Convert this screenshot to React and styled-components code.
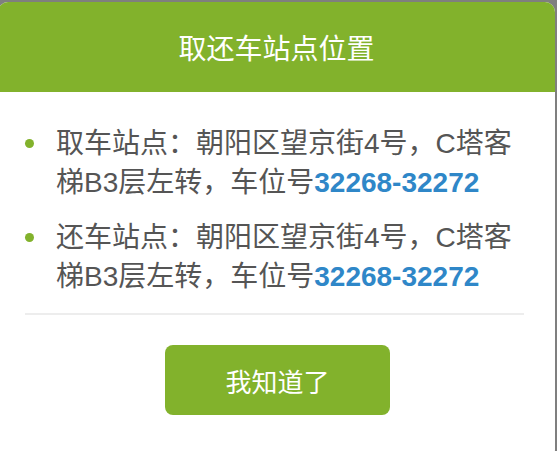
import React from "react";
import styled, { createGlobalStyle } from "styled-components";

const Global = createGlobalStyle`
  html, body { margin: 0; padding: 0; background: #7f7f7f; }
  body { font-family: "Liberation Sans", "Noto Sans CJK SC", sans-serif; overflow: hidden; }
`;

const Dialog = styled.div`
  margin: 2px 0 0 -2px;
  width: 557px;
  height: 452px;
  background: #ffffff;
  border-radius: 10px 10px 4px 4px;
  overflow: hidden;
  display: flex;
  flex-direction: column;
`;

const Header = styled.div`
  height: 90px;
  background: #82b22c;
  color: #ffffff;
  font-size: 28px;
  display: flex;
  align-items: center;
  justify-content: center;
`;

const List = styled.ul`
  list-style: none;
  margin: 0;
  padding: 32px 30px 0 58px;
  display: flex;
  flex-direction: column;
  gap: 16px;
`;

const Item = styled.li`
  position: relative;
  font-size: 28px;
  line-height: 39px;
  color: #555555;
  &::before {
    content: "";
    position: absolute;
    left: -31px;
    top: 15px;
    width: 9px;
    height: 9px;
    border-radius: 50%;
    background: #82b22c;
  }
`;

const Num = styled.span`
  color: #2f87c8;
  font-weight: bold;
`;

const Divider = styled.hr`
  border: none;
  height: 2px;
  background: #ededed;
  margin: 17px 31px 0 27px;
`;

const Footer = styled.div`
  display: flex;
  justify-content: center;
  padding-top: 30px;
`;

const Button = styled.button`
  width: 225px;
  height: 70px;
  margin-left: 2px;
  border: none;
  border-radius: 8px;
  background: #82b22c;
  color: #ffffff;
  font-family: inherit;
  font-size: 26px;
`;

const items = ["取车站点", "还车站点"];

export default function App() {
  return (
    <>
      <Global />
      <Dialog>
        <Header>取还车站点位置</Header>
        <List>
          {items.map((label) => (
            <Item key={label}>
              {label}：朝阳区望京街4号，C塔客梯B3层左转，车位号<Num>32268-32272</Num>
            </Item>
          ))}
        </List>
        <Divider />
        <Footer>
          <Button>我知道了</Button>
        </Footer>
      </Dialog>
    </>
  );
}
